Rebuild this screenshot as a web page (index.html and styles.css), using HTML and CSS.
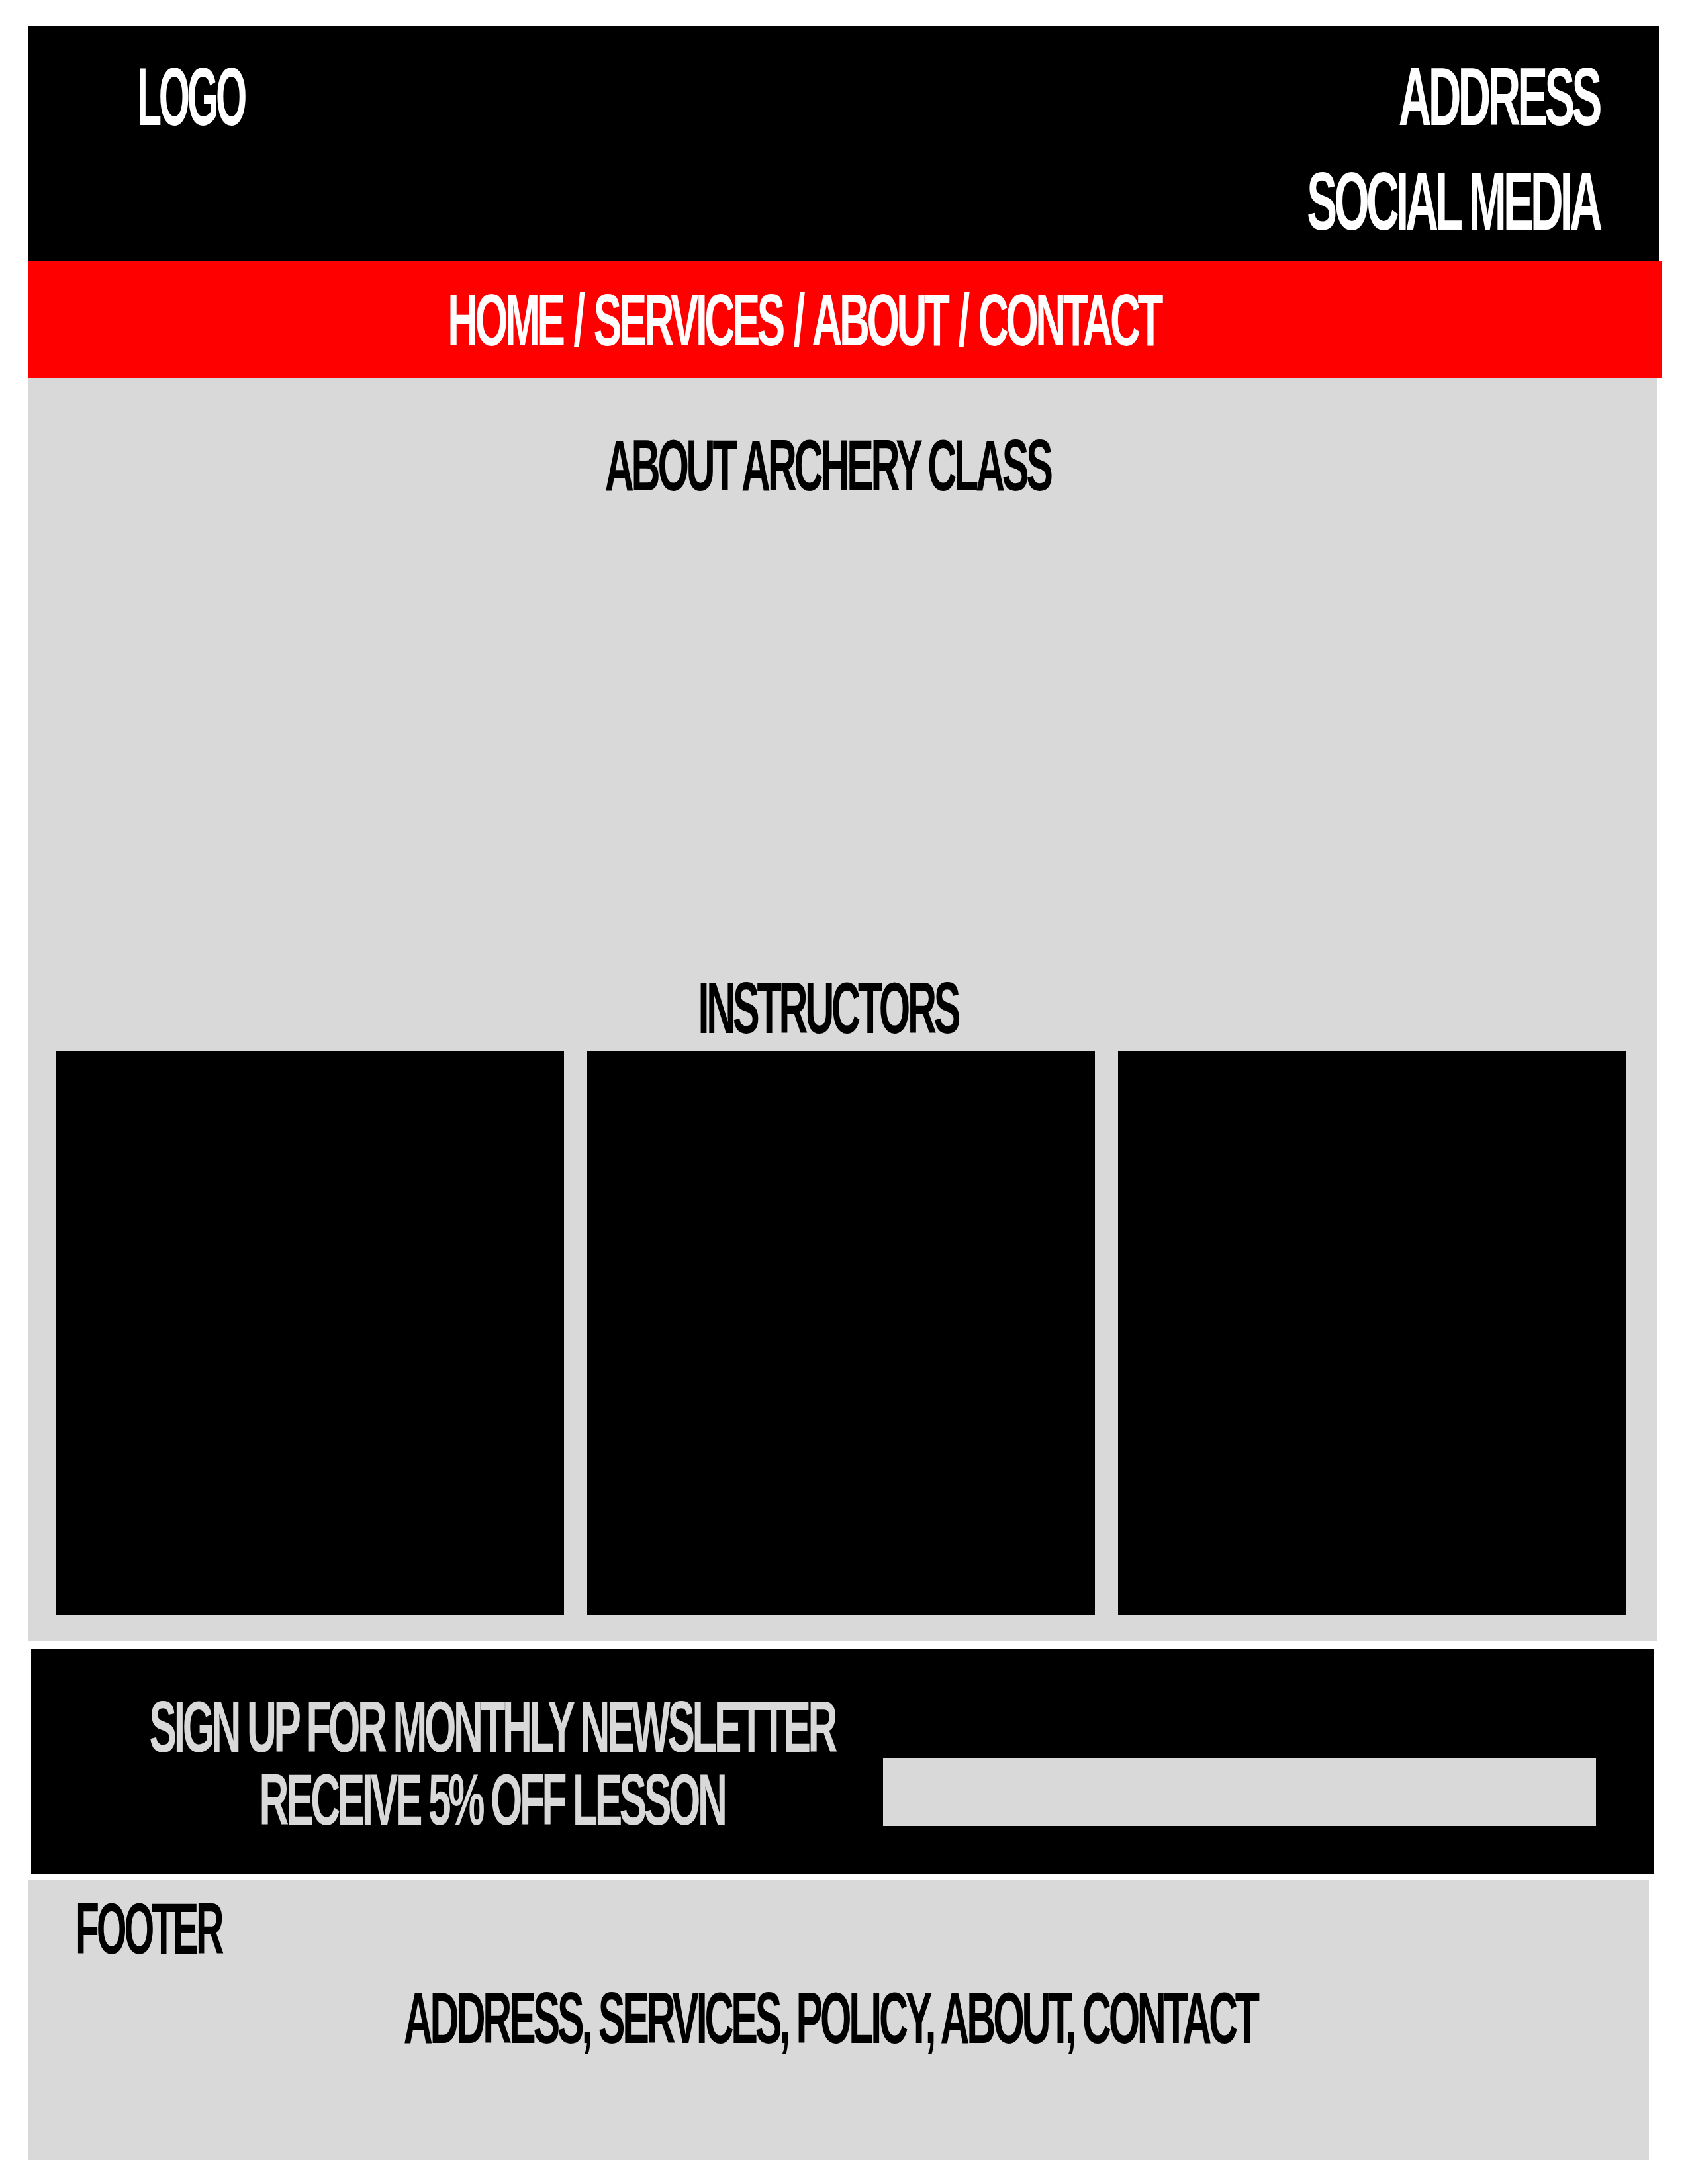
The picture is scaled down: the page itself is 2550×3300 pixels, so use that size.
FILE: index.html
```html
<!DOCTYPE html>
<html lang="en">
<head>
  <meta charset="UTF-8" />
  <meta name="viewport" content="width=device-width, initial-scale=1.0" />
  <title>Archery Class</title>
  <link rel="stylesheet" href="styles.css">
</head>
<body>
  <div class="page">
    <header class="top">
      <div class="logo"><span class="txt">LOGO</span></div>
      <div class="top-info">
        <div class="line"><span class="txt">ADDRESS</span></div>
        <div class="line"><span class="txt">SOCIAL MEDIA</span></div>
      </div>
    </header>

    <nav class="menu"><span class="txt">HOME / SERVICES / ABOUT / CONTACT</span></nav>

    <main class="content">
      <h2 class="heading"><span class="txt">ABOUT ARCHERY CLASS</span></h2>
      <div class="about-body"></div>

      <h2 class="heading"><span class="txt">INSTRUCTORS</span></h2>
      <div class="cards">
        <div class="card"></div>
        <div class="card"></div>
        <div class="card"></div>
      </div>
    </main>

    <section class="newsletter">
      <div class="signup-text">
        <div class="line"><span class="txt">SIGN UP FOR MONTHLY NEWSLETTER</span></div>
        <div class="line"><span class="txt">RECEIVE 5% OFF LESSON</span></div>
      </div>
      <input class="email" type="email" aria-label="Email" />
    </section>

    <footer class="bottom">
      <div class="footer-title"><span class="txt">FOOTER</span></div>
      <div class="footer-links"><span class="txt">ADDRESS, SERVICES, POLICY, ABOUT, CONTACT</span></div>
    </footer>
  </div>
</body>
</html>
```

FILE: styles.css
```css
body {
  margin: 0;
  background: #fff;
  font-family: "Liberation Sans", Arial, sans-serif;
  font-weight: 700;
  overflow: hidden;
}
.page {
  padding: 40px 0 0 42px;
}

/* narrow poster-style lettering */
.txt {
  display: inline-block;
  white-space: nowrap;
  letter-spacing: -0.07em;
  transform: scaleX(0.555);
}

.top {
  width: 2464px;
  box-sizing: border-box;
  background: #000;
  color: #fff;
  display: flex;
  justify-content: space-between;
  align-items: flex-start;
  padding: 44px 90px 29px 165px;
  font-size: 124px;
  line-height: 124px;
}
.logo .txt {
  transform: scaleX(0.49);
  transform-origin: left center;
}
.top-info {
  display: flex;
  flex-direction: column;
  align-items: flex-end;
  gap: 34px;
}
.top-info .txt {
  transform-origin: right center;
}

.menu {
  width: 2468px;
  box-sizing: border-box;
  background: #ff0000;
  color: #fff;
  display: flex;
  justify-content: center;
  padding: 33px 122px 31px 0;
  font-size: 112px;
  line-height: 112px;
}
.menu .txt {
  word-spacing: 0.06em;
  transform: scaleX(0.568);
}

.content {
  width: 2461px;
  box-sizing: border-box;
  background: #d9d9d9;
  padding: 77px 47px 40px 43px;
}
.heading {
  margin: 0 40px 0 0;
  display: flex;
  justify-content: center;
  font-size: 110px;
  line-height: 110px;
  font-weight: 700;
  color: #000;
}
.about-body {
  height: 710px;
}
.cards {
  margin-top: 10px;
  display: grid;
  grid-template-columns: repeat(3, 1fr);
  gap: 35px;
}
.card {
  height: 852px;
  background: #000;
}

.newsletter {
  width: 2452px;
  box-sizing: border-box;
  margin: 12px 0 0 5px;
  background: #000;
  display: flex;
  align-items: flex-start;
  padding: 62px 88px 58px 0;
}
.signup-text {
  width: 1086px;
  margin-left: 153px;
  display: flex;
  flex-direction: column;
  align-items: center;
  color: #d9d9d9;
  font-size: 110px;
  line-height: 110px;
}
.signup-text .txt {
  transform: scaleX(0.565);
}
.email {
  display: block;
  width: 1077px;
  height: 103px;
  margin: 102px 0 0 48px;
  padding: 0;
  border: none;
  border-radius: 0;
  background: #d9d9d9;
}

.bottom {
  width: 2449px;
  box-sizing: border-box;
  margin-top: 8px;
  background: #d9d9d9;
  padding: 19px 0 159px;
  font-size: 110px;
  line-height: 110px;
  color: #000;
}
.footer-title {
  padding-left: 72px;
}
.footer-title .txt {
  transform: scaleX(0.535);
  transform-origin: left center;
}
.footer-links {
  margin: 25px 24px 0 0;
  display: flex;
  justify-content: center;
}
```
